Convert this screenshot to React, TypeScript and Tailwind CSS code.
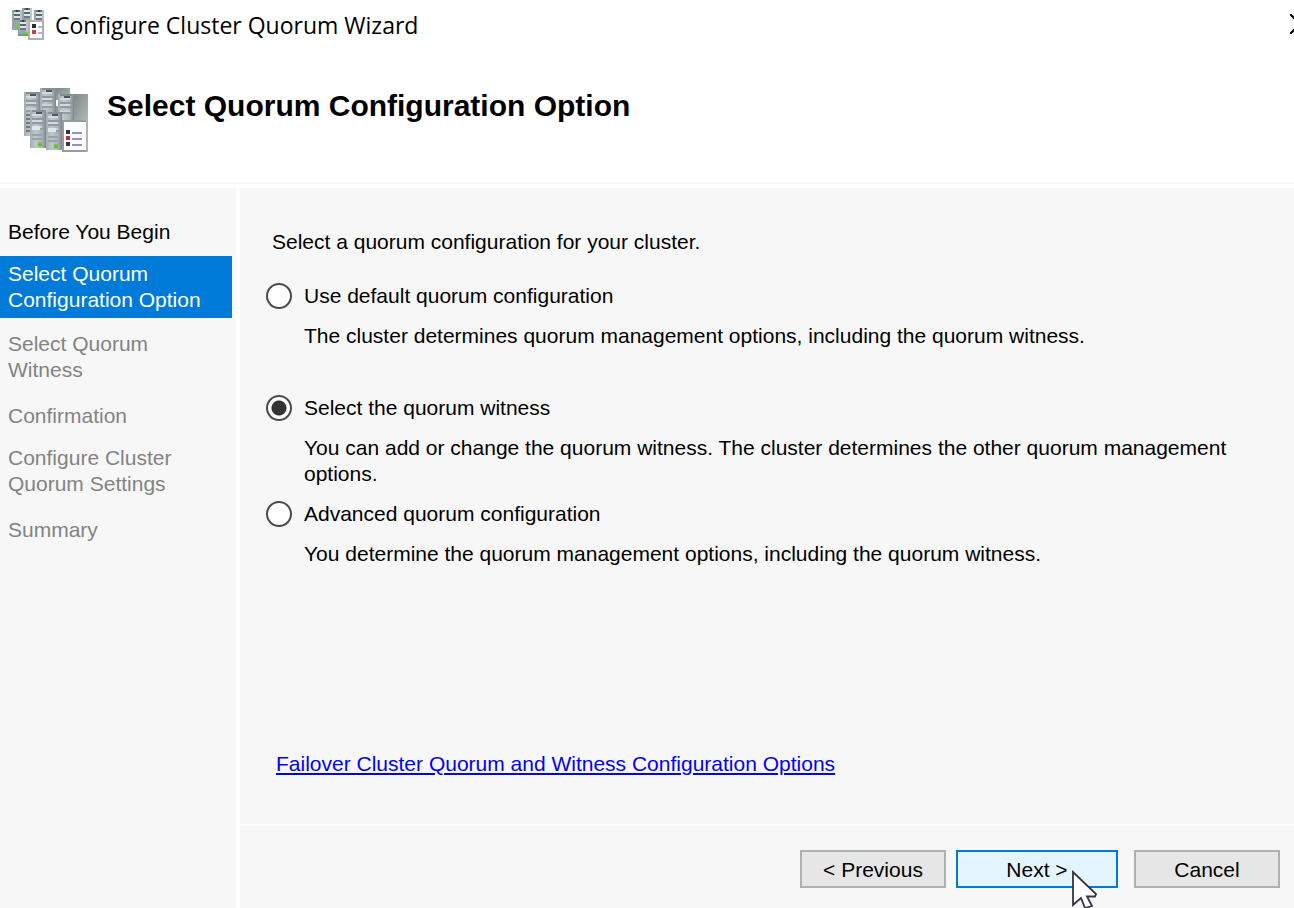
import { useState } from "react";

type Tower = { x: number; y: number; w: number; h: number; light?: boolean };

const towers: Tower[] = [
  { x: 0, y: 2, w: 8, h: 22 },
  { x: 8, y: 0, w: 8, h: 12 },
  { x: 17, y: 3, w: 8, h: 14 },
  { x: 3, y: 11, w: 8, h: 19, light: true },
  { x: 11, y: 12, w: 8, h: 19, light: true },
];

function ClusterIcon() {
  return (
    <svg className="size-16 shrink-0" viewBox="0 0 32 32" shapeRendering="crispEdges" aria-hidden="true">
      <defs>
        <linearGradient id="tower" x1="0" x2="1" y1="0" y2="0">
          <stop offset="0" stopColor="#a3adb0" />
          <stop offset="0.35" stopColor="#bec7ca" />
          <stop offset="0.75" stopColor="#aab4b8" />
          <stop offset="1" stopColor="#7a878b" />
        </linearGradient>
        <linearGradient id="side" x1="0" x2="1" y1="0" y2="1">
          <stop offset="0" stopColor="#7c8987" />
          <stop offset="1" stopColor="#b3bbba" />
        </linearGradient>
      </defs>
      <rect x="16" y="0" width="7" height="6" fill="url(#side)" />
      <rect x="25" y="3" width="7" height="14" fill="url(#side)" />
      <rect x="7" y="9" width="12" height="15" fill="#8d999c" />
      {towers.map((t) => (
        <g key={`${t.x}-${t.y}`}>
          <rect x={t.x} y={t.y} width={t.w} height={t.h} fill="url(#tower)" />
          <rect x={t.x + 1} y={t.y} width={t.w - 2} height="1" fill="#848f93" />
          <rect x={t.x + 3} y={t.y + 1} width="3" height="1" fill="#4c575b" />
          <rect x={t.x + 1} y={t.y + 2} width="5" height="1" fill="#d3dbde" />
          <rect x={t.x + 1} y={t.y + 4} width="6" height="1" fill="#8f9ba0" />
          <rect x={t.x + 1} y={t.y + 5} width="5" height="1" fill="#d0d9dd" />
          <rect x={t.x + 1} y={t.y + 6} width="6" height="1" fill="#8f9ba0" />
          <rect x={t.x + 1} y={t.y + 8} width="5" height="1" fill="#c9d2d6" />
          <rect x={t.x + 1} y={t.y + 9} width="6" height="1" fill="#929ea3" />
          {t.light && (
            <>
              <rect x={t.x + 1} y={t.y + 8} width="4" height="2" fill="#dce7ec" />
              <rect x={t.x + 1} y={t.y + 12} width="5" height="1" fill="#98a4a9" />
              <rect x={t.x + 1} y={t.y + 14} width="5" height="1" fill="#98a4a9" />
              <rect x={t.x + 4} y={t.y + 16} width="2" height="1" fill="#8fb84a" />
              <rect x={t.x + 4} y={t.y + 17} width="2" height="1" fill="#45d60c" />
            </>
          )}
        </g>
      ))}
      {[13, 15, 17, 19, 21].map((y) => (
        <rect key={y} x="1" y={y} width="2" height="1" fill="#6f7c80" />
      ))}
      <rect x="19" y="16" width="13" height="16" fill="#9b9b9b" />
      <rect x="20" y="17" width="11" height="14" fill="#fcfcfe" />
      <rect x="31" y="16" width="1" height="16" fill="#b3b3b3" />
      <rect x="21" y="21" width="2" height="2" fill="#36363f" />
      <rect x="21" y="24" width="2" height="2" fill="#cf2a2e" />
      <rect x="21" y="27" width="2" height="2" fill="#36363f" />
      <rect x="24" y="22" width="5" height="1" fill="#9494b4" />
      <rect x="24" y="25" width="5" height="1" fill="#9494b4" />
      <rect x="24" y="28" width="5" height="1" fill="#9494b4" />
    </svg>
  );
}

const miniTowers = [
  { x: 0, y: 1, h: 10 },
  { x: 5, y: 0, h: 7 },
  { x: 11, y: 1, h: 6 },
  { x: 3, y: 6, h: 7 },
];

function ClusterIconSmall() {
  return (
    <svg className="size-8 shrink-0" viewBox="0 0 16 16" shapeRendering="crispEdges" aria-hidden="true">
      {miniTowers.map((t) => (
        <g key={`${t.x}-${t.y}`}>
          <rect x={t.x} y={t.y} width="4" height={t.h} fill="#98a5a9" />
          <rect x={t.x + 4} y={t.y} width="1" height={t.h} fill="#bcc5c7" />
          <rect x={t.x + 1} y={t.y} width="3" height="1" fill="#68757a" />
          <rect x={t.x + 2} y={t.y} width="1" height="1" fill="#354247" />
          <rect x={t.x + 1} y={t.y + 1} width="3" height="1" fill="#dce5e8" />
          <rect x={t.x + 1} y={t.y + 2} width="3" height="1" fill="#596970" />
          <rect x={t.x + 1} y={t.y + 3} width="3" height="1" fill="#dce5e8" />
          <rect x={t.x + 1} y={t.y + 4} width="3" height="1" fill="#6b7a80" />
        </g>
      ))}
      <rect x="2" y="8" width="1" height="2" fill="#4fe31e" />
      <rect x="6" y="12" width="2" height="1" fill="#4fe31e" />
      <rect x="3" y="13" width="5" height="1" fill="#84908f" />
      <rect x="8" y="6" width="8" height="10" fill="#b0b0b0" />
      <rect x="9" y="7" width="6" height="8" fill="#ffffff" />
      <rect x="10" y="8" width="2" height="2" fill="#2b2b38" />
      <rect x="10" y="11" width="2" height="2" fill="#d63a3a" />
      <rect x="13" y="9" width="2" height="1" fill="#b4b4cc" />
      <rect x="13" y="12" width="2" height="1" fill="#b4b4cc" />
    </svg>
  );
}

function Pointer() {
  return (
    <svg
      className="pointer-events-none absolute top-[18px] left-[114px] h-[38px] w-[26px]"
      viewBox="-1 -2 26 38"
      aria-hidden="true"
    >
      <path
        d="M0 0V33L8 26L12 36L19 34L14 24.500H22L23 22Z"
        fill="#ffffff"
        stroke="#34343e"
        strokeWidth="1.800"
      />
    </svg>
  );
}

const steps = [
  { lines: ["Before You Begin"], state: "done" },
  { lines: ["Select Quorum", "Configuration Option"], state: "current" },
  { lines: ["Select Quorum", "Witness"], state: "pending" },
  { lines: ["Confirmation"], state: "pending" },
  { lines: ["Configure Cluster", "Quorum Settings"], state: "pending" },
  { lines: ["Summary"], state: "pending" },
];

const stepColor: Record<string, string> = {
  done: "text-black",
  current: "bg-[#007ad9] text-white",
  pending: "text-[#838383]",
};

const options = [
  {
    id: "default",
    label: "Use default quorum configuration",
    text: "The cluster determines quorum management options, including the quorum witness.",
    space: "pb-[46px]",
  },
  {
    id: "witness",
    label: "Select the quorum witness",
    text: "You can add or change the quorum witness. The cluster determines the other quorum management options.",
    space: "pb-[14px]",
  },
  {
    id: "advanced",
    label: "Advanced quorum configuration",
    text: "You determine the quorum management options, including the quorum witness.",
    space: "pb-[14px]",
  },
];

export default function App() {
  const [choice, setChoice] = useState("witness");

  return (
    <div className="flex h-screen flex-col overflow-hidden bg-white font-['Liberation_Sans',Arial,sans-serif] text-[21px] leading-[26px] text-black">
      <div className="flex shrink-0 items-center gap-[11px] pt-2 pl-3">
        <ClusterIconSmall />
        <span className="pt-0.5 font-['Open_Sans','Noto_Sans',sans-serif] text-[23px] leading-[30px]">
          Configure Cluster Quorum Wizard
        </span>
        <button type="button" aria-label="Close" className="-mr-4 ml-auto size-5">
          <svg className="size-5" viewBox="0 0 20 20" aria-hidden="true">
            <path d="M0 0L20 20M20 0L0 20" stroke="#000000" strokeWidth="2" />
          </svg>
        </button>
      </div>

      <header className="mt-12 flex shrink-0 items-start gap-[19px] border-b-2 border-[#f7f7f7] pb-[30px] pl-6">
        <ClusterIcon />
        <h1 className="pt-0.5 text-[30px] leading-8 font-bold">
          Select Quorum Configuration Option
        </h1>
      </header>

      <div className="mt-1 flex min-h-0 grow gap-1">
        <nav aria-label="Wizard steps" className="w-[236px] shrink-0 bg-[#f7f7f7] pt-6 pr-1">
          <ol className="flex flex-col gap-2">
            {steps.map((step) => (
              <li
                key={step.lines.join(" ")}
                aria-current={step.state === "current" ? "step" : undefined}
                className={`pl-2 ${step.lines.length > 1 ? "py-[5px]" : "pt-[7px] pb-[3px]"} ${stepColor[step.state]}`}
              >
                {step.lines.map((line) => (
                  <span key={line} className="block whitespace-nowrap">
                    {line}
                  </span>
                ))}
              </li>
            ))}
          </ol>
        </nav>

        <main className="flex min-w-0 grow flex-col gap-0.5">
          <section className="flex grow flex-col bg-[#f7f7f7] pt-[41px] pr-8 pb-[47px] pl-[26px]">
            <p className="pl-1.5">Select a quorum configuration for your cluster.</p>
            <div role="radiogroup" aria-label="Quorum configuration" className="pt-7">
              {options.map((o) => (
                <div key={o.id} className={o.space}>
                  <div className="flex items-center gap-3">
                    <input
                      type="radio"
                      id={o.id}
                      name="quorum"
                      checked={choice === o.id}
                      onChange={() => setChoice(o.id)}
                      aria-describedby={`${o.id}-text`}
                      className="size-[26px] shrink-0 appearance-none rounded-full border-2 border-[#4a4a4a] bg-white bg-clip-padding p-1 checked:bg-[radial-gradient(circle,#333333_7px,#ffffff_8px)]"
                    />
                    <label htmlFor={o.id}>{o.label}</label>
                  </div>
                  <p id={`${o.id}-text`} className="pt-3.5 pl-[38px]">
                    {o.text}
                  </p>
                </div>
              ))}
            </div>
            <a href="#quorum-options" className="mt-auto ml-2.5 self-start text-[#0000ff] underline decoration-2 underline-offset-2">
              Failover Cluster Quorum and Witness Configuration Options
            </a>
          </section>

          <footer className="flex shrink-0 justify-end bg-[#f7f7f7] pt-6 pr-3.5 pb-5">
            <button type="button" className="h-[38px] w-[146px] border-2 border-[#adb2b1] bg-[#e6e6e6] pt-0.5">
              &lt; Previous
            </button>
            <button
              type="button"
              className="relative ml-2.5 h-[38px] w-[162px] border-2 border-[#007ad9] bg-[#e5f5ff] pt-0.5"
            >
              Next &gt;
              <Pointer />
            </button>
            <button type="button" className="ml-4 h-[38px] w-[146px] border-2 border-[#adb2b1] bg-[#e6e6e6] pt-0.5">
              Cancel
            </button>
          </footer>
        </main>
      </div>
    </div>
  );
}
